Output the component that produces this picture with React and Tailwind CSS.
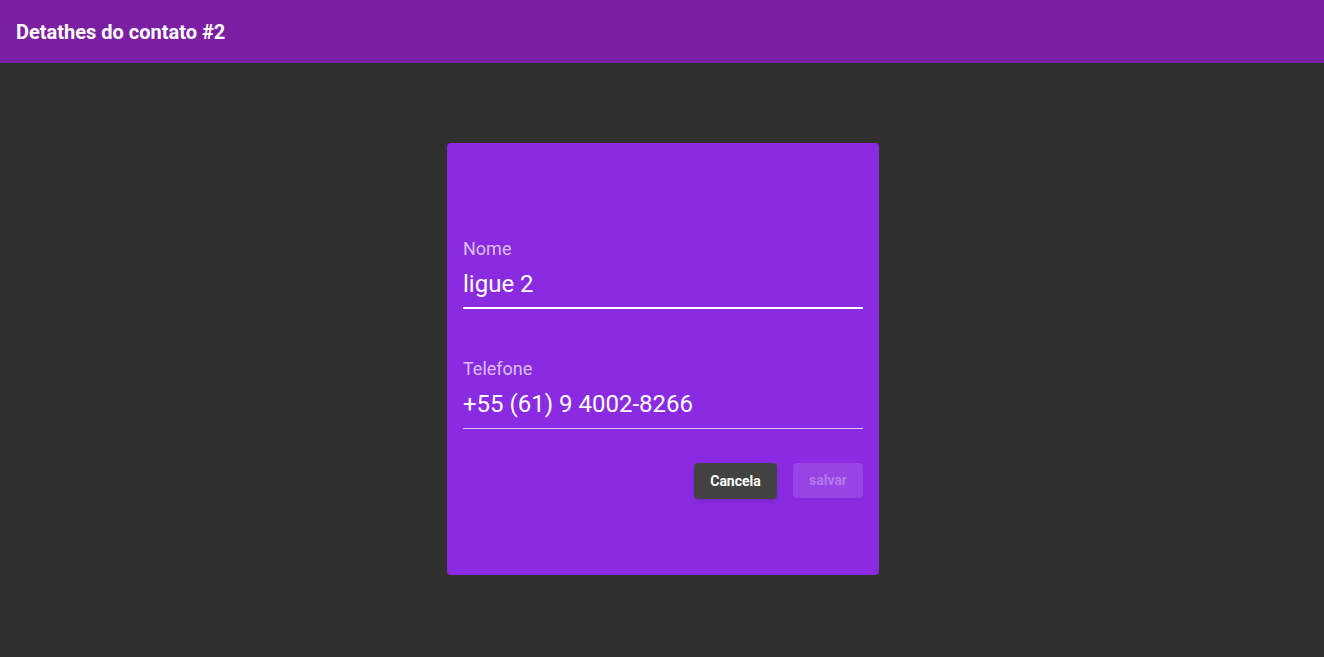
import React, { useState } from 'react'

const App = () => {
  const [nome, setNome] = useState('ligue 2')
  const [telefone, setTelefone] = useState('+55 (61) 9 4002-8266')

  return (
    <div className="min-h-screen w-full bg-[#303030]" style={{ fontFamily: 'Roboto, "Liberation Sans", sans-serif' }}>
      {/* Toolbar */}
      <header className="flex h-[63px] items-center bg-[#7b1fa2] px-4">
        <h1 className="text-[20px] font-bold text-white">Detathes do contato #2</h1>
      </header>

      {/* Card */}
      <div className="flex justify-center pl-[2px] pt-[80px]">
        <div className="h-[432px] w-[432px] rounded bg-[#8a2be2] px-4 pt-[94px]">
          <form className="flex flex-col">
            <label className="flex flex-col">
              <span className="text-[18px] leading-6 text-white/70">Nome</span>
              <input
                value={nome}
                onChange={(e) => setNome(e.target.value)}
                className="mt-[9px] box-content h-[28px] border-b-2 border-white bg-transparent pb-[9px] text-[24px] leading-[28px] text-white outline-none"
              />
            </label>

            <label className="mt-[48px] flex flex-col">
              <span className="text-[18px] leading-6 text-white/70">Telefone</span>
              <input
                value={telefone}
                onChange={(e) => setTelefone(e.target.value)}
                className="mt-[9px] box-content h-[28px] border-b border-white/70 bg-transparent pb-[10px] text-[24px] leading-[28px] text-white outline-none"
              />
            </label>

            <div className="mt-[34px] flex justify-end gap-4">
              <button
                type="button"
                className="h-9 w-[83px] rounded bg-[#424242] text-[14px] font-bold text-white shadow-md"
              >
                Cancela
              </button>
              <button
                type="button"
                disabled
                className="h-[35px] w-[70px] rounded bg-white/[0.12] text-[14px] font-bold text-white/30"
              >
                salvar
              </button>
            </div>
          </form>
        </div>
      </div>
    </div>
  )
}

export default App
